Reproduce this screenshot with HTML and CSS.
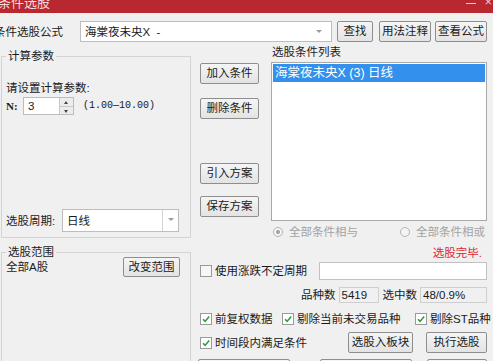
FILE: index.html
```html
<!DOCTYPE html>
<html lang="zh-CN">
<head>
    <meta charset="UTF-8">
    <title>条件选股</title>
    <link rel="stylesheet" href="styles.css">
</head>
<body>
    <div class="window">
        <div class="titlebar">
            <span class="title">条件选股</span>
            <span class="win-min"></span>
            <span class="win-close">×</span>
        </div>

        <div class="formula-row">
            <span class="formula-label">条件选股公式</span>
            <div class="combo formula-combo">
                <span class="combo-text">海棠夜未央X &nbsp;-</span>
                <span class="combo-arrow"></span>
            </div>
            <button class="btn btn-find">查找</button>
            <button class="btn btn-note">用法注释</button>
            <button class="btn btn-view">查看公式</button>
        </div>

        <div class="main">
            <div class="left">
                <fieldset class="group group-param">
                    <legend>计算参数</legend>
                    <div class="param-tip">请设置计算参数:</div>
                    <div class="param-row">
                        <span class="param-name">N:</span>
                        <div class="spin">
                            <span class="spin-value">3</span>
                            <span class="spin-btns">
                                <span class="spin-up"></span>
                                <span class="spin-down"></span>
                            </span>
                        </div>
                        <span class="param-range">(1.00—10.00)</span>
                    </div>
                    <div class="period-row">
                        <span class="period-label">选股周期:</span>
                        <div class="combo period-combo">
                            <span class="combo-text">日线</span>
                            <span class="combo-arrow with-sep"></span>
                        </div>
                    </div>
                </fieldset>
                <fieldset class="group group-range">
                    <legend>选股范围</legend>
                    <div class="range-row">
                        <span>全部A股</span>
                        <button class="btn btn-range">改变范围</button>
                    </div>
                </fieldset>
            </div>

            <div class="right">
                <div class="right-top">
                    <div class="side-btns">
                        <button class="btn btn-side btn-add">加入条件</button>
                        <button class="btn btn-side btn-del">删除条件</button>
                        <button class="btn btn-side btn-load">引入方案</button>
                        <button class="btn btn-side btn-save">保存方案</button>
                    </div>
                    <div class="cond-col">
                        <div class="cond-title">选股条件列表</div>
                        <div class="cond-list">
                            <div class="cond-item selected">海棠夜未央X (3) 日线</div>
                        </div>
                    </div>
                </div>

                <div class="radio-row">
                    <span class="radio-item first"><span class="radio checked"></span>全部条件相与</span>
                    <span class="radio-item"><span class="radio"></span>全部条件相或</span>
                </div>

                <div class="status-row">选股完毕.</div>

                <div class="period-check-row">
                    <svg class="chk" viewBox="0 0 12 12"><rect x="0.5" y="0.5" width="11" height="11" fill="#f6f6f6" stroke="#9a9a9a"/></svg>
                    <span class="chk-text">使用涨跌不定周期</span>
                    <div class="text-input"></div>
                </div>

                <div class="count-row">
                    <span>品种数</span>
                    <span class="count-box box-total">5419</span>
                    <span class="count-label">选中数</span>
                    <span class="count-box box-picked">48/0.9%</span>
                </div>

                <div class="check-row">
                    <span class="check-item">
                        <svg class="chk" viewBox="0 0 12 12"><rect x="0.5" y="0.5" width="11" height="11" fill="#fff" stroke="#9a9a9a"/><path d="M3 6.3 L5.1 8.4 L9.2 3.6" fill="none" stroke="#2e9c36" stroke-width="1.6"/></svg>
                        <span class="chk-text">前复权数据</span>
                    </span>
                    <span class="check-item">
                        <svg class="chk" viewBox="0 0 12 12"><rect x="0.5" y="0.5" width="11" height="11" fill="#fff" stroke="#9a9a9a"/><path d="M3 6.3 L5.1 8.4 L9.2 3.6" fill="none" stroke="#2e9c36" stroke-width="1.6"/></svg>
                        <span class="chk-text">剔除当前未交易品种</span>
                    </span>
                    <span class="check-item">
                        <svg class="chk" viewBox="0 0 12 12"><rect x="0.5" y="0.5" width="11" height="11" fill="#fff" stroke="#9a9a9a"/><path d="M3 6.3 L5.1 8.4 L9.2 3.6" fill="none" stroke="#2e9c36" stroke-width="1.6"/></svg>
                        <span class="chk-text">剔除ST品种</span>
                    </span>
                </div>

                <div class="action-row">
                    <svg class="chk" viewBox="0 0 12 12"><rect x="0.5" y="0.5" width="11" height="11" fill="#fff" stroke="#9a9a9a"/><path d="M3 6.3 L5.1 8.4 L9.2 3.6" fill="none" stroke="#2e9c36" stroke-width="1.6"/></svg>
                    <span class="chk-text">时间段内满足条件</span>
                    <button class="btn btn-block">选股入板块</button>
                    <button class="btn btn-run">执行选股</button>
                </div>

                <div class="bottom-btns">
                    <button class="btn btn-b1"></button>
                    <button class="btn btn-b2"></button>
                    <button class="btn btn-b3"></button>
                </div>
            </div>
        </div>
    </div>
</body>
</html>
```

FILE: styles.css
```css
* {
    box-sizing: border-box;
}
body {
    margin: 0;
    background: #f0f0f0;
    font-family: "Liberation Sans", "Noto Sans CJK SC", sans-serif;
    font-size: 11.5px;
    line-height: 14px;
    color: #1a1a1a;
}
.window {
    width: 493px;
    height: 361px;
    overflow: hidden;
    background: #f0f0f0;
}

/* 标题栏 */
.titlebar {
    height: 13px;
    background: #b8282e;
    display: flex;
    overflow: hidden;
}
.title {
    color: #f6dcdc;
    font-size: 13px;
    line-height: 13px;
    margin-top: -4px;
    margin-left: -2px;
}
.win-min {
    margin-left: auto;
    margin-top: 3px;
    width: 10px;
    height: 1px;
    background: #f1c9c9;
}
.win-close {
    color: #f1c9c9;
    font-size: 13px;
    line-height: 13px;
    margin-top: -5px;
    margin-left: 8px;
    margin-right: 1px;
}

/* 公式行 */
.formula-row {
    display: flex;
    align-items: center;
    height: 21px;
    margin-top: 8px;
}
.formula-label {
    width: 86px;
    margin-left: -6px;
}
.combo {
    display: flex;
    align-items: center;
    background: #fff;
    border: 1px solid #bdbdbd;
    height: 21px;
}
.combo-text {
    flex: 1;
    padding-left: 4px;
    white-space: nowrap;
}
.combo-arrow {
    width: 16px;
    height: 100%;
    position: relative;
}
.combo-arrow::after {
    content: "";
    position: absolute;
    left: 5px;
    top: 8px;
    border-left: 3px solid transparent;
    border-right: 3px solid transparent;
    border-top: 3px solid #9a9a9a;
}
.combo-arrow.with-sep {
    border-left: 1px solid #d4d4d4;
}
.formula-combo {
    width: 252px;
}
.formula-combo .combo-arrow {
    margin-right: 4px;
}

.btn {
    font-family: "Liberation Sans", "Noto Sans CJK SC", sans-serif;
    font-size: 11.5px;
    color: #1a1a1a;
    background: linear-gradient(#f5f5f5, #e3e3e3);
    border: 1px solid #8e8e8e;
    border-radius: 2px;
    height: 21px;
    padding: 0;
    line-height: 19px;
}
.btn-find {
    width: 36px;
    margin-left: 5px;
}
.btn-note {
    width: 52px;
    margin-left: 6px;
}
.btn-view {
    width: 52px;
    margin-left: 4px;
}

/* 主体 */
.main {
    display: flex;
    margin-top: 3px;
}
.left {
    width: 190px;
    margin-left: 1px;
}
.group {
    margin: 0;
    border: 1px solid #d3d3d3;
    padding: 0 10px 0 4px;
    min-width: 0;
}
.group legend {
    padding: 0 2px;
    line-height: 10px;
}
.group-param {
    margin-top: 6px;
    padding-top: 20px;
    padding-bottom: 5px;
}
.param-row {
    display: flex;
    align-items: center;
    height: 18px;
    margin-top: 2px;
}
.param-name {
    font-family: "Liberation Serif", serif;
    font-weight: bold;
    font-size: 11px;
    width: 17px;
}
.spin {
    display: flex;
    width: 51px;
    height: 18px;
    border: 1px solid #bdbdbd;
    background: #fff;
}
.spin-value {
    flex: 1;
    padding-left: 4px;
    line-height: 16px;
}
.spin-btns {
    width: 14px;
    display: flex;
    flex-direction: column;
    border-left: 1px solid #c8c8c8;
    background: #ececec;
}
.spin-up,
.spin-down {
    flex: 1;
    position: relative;
}
.spin-up {
    border-bottom: 1px solid #c8c8c8;
}
.spin-up::after,
.spin-down::after {
    content: "";
    position: absolute;
    left: 4px;
    border-left: 2px solid transparent;
    border-right: 2px solid transparent;
}
.spin-up::after {
    top: 3px;
    border-bottom: 3px solid #444;
}
.spin-down::after {
    top: 3px;
    border-top: 3px solid #444;
}
.param-range {
    font-family: "Liberation Mono", monospace;
    font-size: 10px;
    margin-left: 9px;
}
.period-row {
    display: flex;
    align-items: center;
    margin-top: 94px;
}
.period-label {
    width: 56px;
}
.period-combo {
    width: 117px;
    height: 23px;
}

.group-range {
    margin-top: 9px;
    height: 130px;
}
.range-row {
    display: flex;
    justify-content: space-between;
    align-items: center;
    height: 20px;
}
.btn-range {
    width: 57px;
    height: 20px;
    line-height: 18px;
}

/* 右侧 */
.right {
    width: 288px;
    margin-left: 9px;
}
.right-top {
    display: flex;
    height: 176px;
}
.side-btns {
    width: 60px;
    padding-top: 18px;
    display: flex;
    flex-direction: column;
}
.btn-side {
    width: 59px;
}
.btn-del {
    margin-top: 14px;
}
.btn-load {
    margin-top: 44px;
}
.btn-save {
    margin-top: 12px;
}
.cond-col {
    margin-left: 11px;
    width: 216px;
}
.cond-title {
    padding-left: 1px;
}
.cond-list {
    margin-top: 3px;
    height: 159px;
    background: #fff;
    border: 1px solid #a9a9a9;
    padding: 1px;
}
.cond-item {
    height: 18px;
    line-height: 18px;
    font-size: 12.5px;
    padding-left: 2px;
}
.cond-item.selected {
    background: #3390ec;
    color: #fff;
}

.radio-row {
    display: flex;
    align-items: center;
    height: 14px;
    margin-top: 4px;
    padding-left: 73px;
    color: #a3a3a3;
}
.radio-item {
    display: flex;
    align-items: center;
}
.radio-item.first {
    width: 127px;
}
.radio {
    width: 10px;
    height: 10px;
    border-radius: 50%;
    border: 1px solid #b4b4b4;
    background: #f4f4f4;
    margin-right: 6px;
    position: relative;
}
.radio.checked::after {
    content: "";
    position: absolute;
    left: 2px;
    top: 2px;
    width: 4px;
    height: 4px;
    border-radius: 50%;
    background: #a0a0a0;
}

.status-row {
    margin-top: 7px;
    height: 14px;
    text-align: right;
    padding-right: 6px;
    color: #d9272e;
}

.chk {
    width: 12px;
    height: 12px;
    flex: none;
}
.chk-text {
    margin-left: 3px;
    white-space: nowrap;
}
.period-check-row {
    display: flex;
    align-items: center;
    margin-top: 2px;
    height: 18px;
}
.text-input {
    margin-left: auto;
    margin-right: 1px;
    width: 168px;
    height: 18px;
    background: #fff;
    border: 1px solid #c2c2c2;
}

.count-row {
    display: flex;
    justify-content: flex-end;
    align-items: center;
    margin-top: 7px;
    height: 16px;
    padding-right: 1px;
}
.count-box {
    height: 16px;
    line-height: 14px;
    border: 1px solid #cfcfcf;
    padding-left: 2px;
    margin-left: 3px;
}
.box-total {
    width: 40px;
}
.box-picked {
    width: 67px;
}
.count-label {
    margin-left: 4px;
}

.check-row {
    display: grid;
    grid-template-columns: 82px 133px auto;
    margin-top: 9px;
    height: 14px;
}
.check-item {
    display: flex;
    align-items: center;
}

.action-row {
    display: flex;
    align-items: center;
    margin-top: 6px;
    height: 21px;
    padding-right: 1px;
}
.btn-block {
    margin-left: auto;
    width: 65px;
}
.btn-run {
    margin-left: 13px;
    width: 61px;
}

.bottom-btns {
    display: flex;
    margin-top: 6px;
    margin-left: -2px;
}
.btn-b1 {
    width: 92px;
}
.btn-b2 {
    width: 92px;
    margin-left: 30px;
}
.btn-b3 {
    width: 60px;
    margin-left: 15px;
}
```
